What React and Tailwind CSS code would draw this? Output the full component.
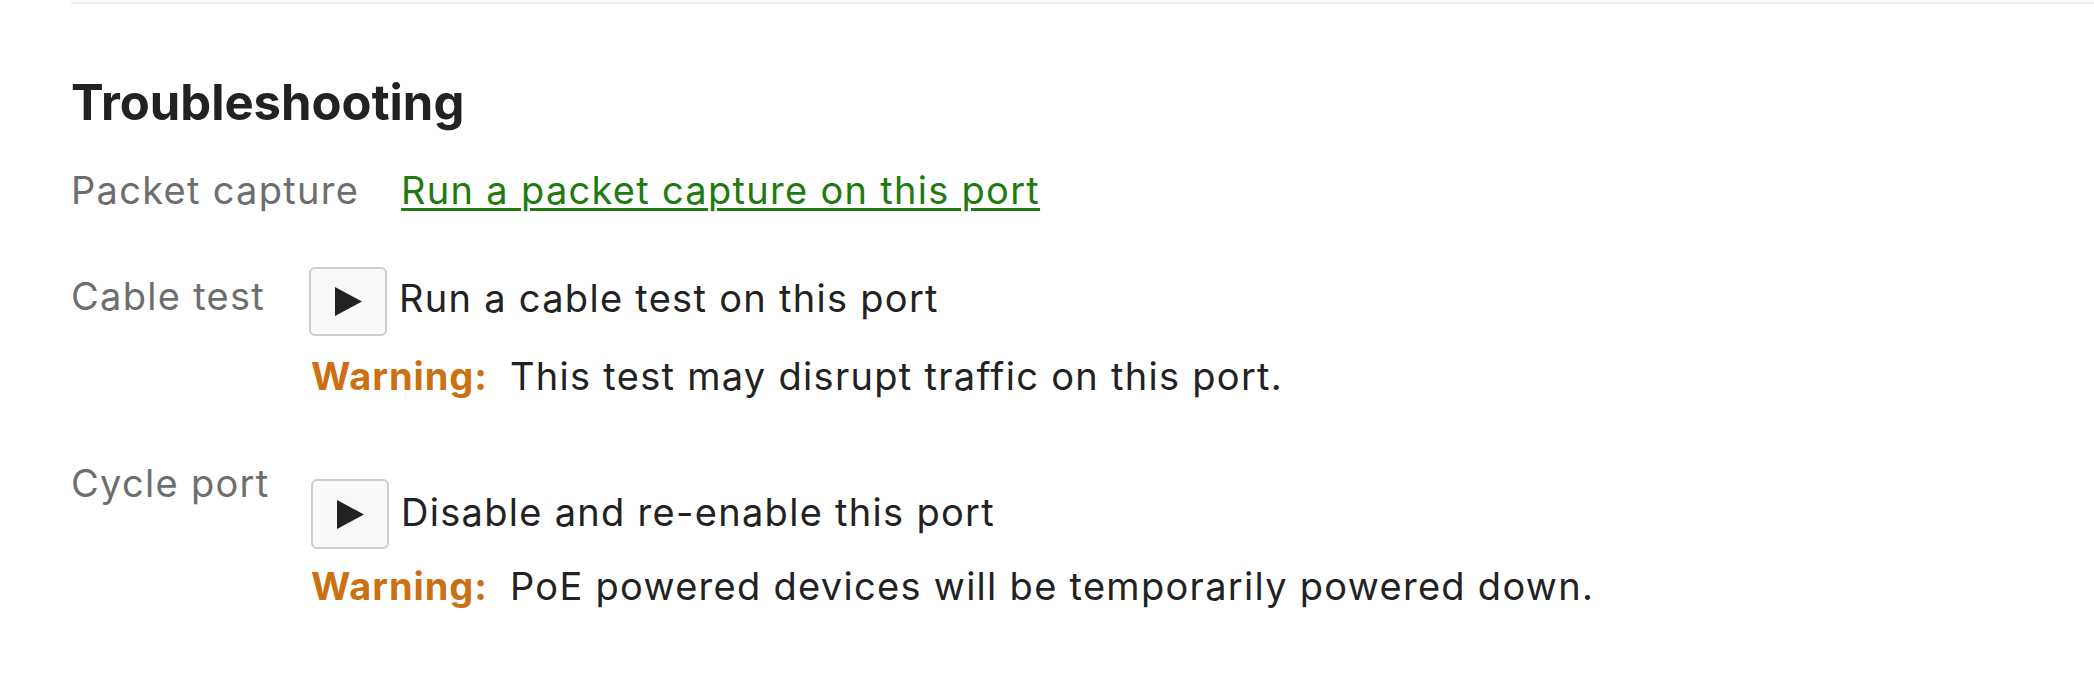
const PlayButton = ({ className = '' }) => (
  <button
    type="button"
    className={`flex h-[69px] w-[78px] shrink-0 items-center justify-center rounded-[6px] border-2 border-[#cdcdcd] bg-[#f9f9f9] ${className}`}
  >
    <svg width="27" height="29" viewBox="0 0 27 29" aria-hidden="true">
      <polygon points="0,0 27,14.5 0,29" fill="#222222" />
    </svg>
  </button>
);

const Warning = ({ children, className = '' }) => (
  <p className={`text-[#222222] ${className}`}>
    <span className="font-bold tracking-[0.025em] text-[#cc7014]">Warning:</span>{' '}
    <span className="ml-[10px]">{children}</span>
  </p>
);

export default function App() {
  return (
    <div className="min-h-screen bg-white pl-[71px] pt-[2px] font-['Inter',sans-serif]">
      <div className="border-t-2 border-[#eeeeee]" />

      <section className="pt-[69px]">
        <h2 className="text-[49px] font-bold leading-[60px] text-[#222222]">Troubleshooting</h2>

        <div className="text-[38px] leading-[44px] tracking-[0.034em]">
          {/* Packet capture */}
          <div className="mt-[35px] flex gap-[42px]">
            <span className="text-[#6e6e6e]">Packet capture</span>
            <a href="#" className="text-[#217a10] underline decoration-[3px] underline-offset-[4px]">
              Run a packet capture on this port
            </a>
          </div>

          {/* Cable test */}
          <div className="mt-[55px] flex">
            <span className="mt-[7px] w-[238px] shrink-0 text-[#6e6e6e]">Cable test</span>
            <div>
              <div className="flex items-start gap-[12px]">
                <PlayButton />
                <span className="mt-[9px] text-[#222222]">Run a cable test on this port</span>
              </div>
              <Warning className="ml-[2px] mt-[18px]">This test may disrupt traffic on this port.</Warning>
            </div>
          </div>

          {/* Cycle port */}
          <div className="mt-[63px] flex">
            <span className="w-[238px] shrink-0 text-[#6e6e6e]">Cycle port</span>
            <div className="mt-[18px]">
              <div className="flex items-start gap-[12px]">
                <PlayButton className="ml-[2px] h-[70px]" />
                <span className="mt-[11px] text-[#222222]">Disable and re-enable this port</span>
              </div>
              <Warning className="ml-[2px] mt-[15px]">PoE powered devices will be temporarily powered down.</Warning>
            </div>
          </div>
        </div>
      </section>
    </div>
  );
}
